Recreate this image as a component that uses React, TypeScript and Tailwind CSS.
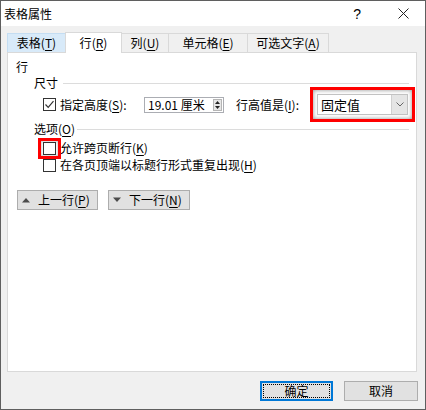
import React from 'react';

const font = { fontFamily: '"Noto Sans CJK SC", "Noto Sans", sans-serif' };

function Mn({ k }: { k: string }) {
  return (
    <span>
      (<span className="underline underline-offset-2">{k}</span>)
    </span>
  );
}

function CheckBox({ checked }: { checked?: boolean }) {
  return (
    <div className="w-[13px] h-[13px] border border-[#333333] bg-white flex items-center justify-center shrink-0">
      {checked && (
        <svg width="11" height="11" viewBox="0 0 11 11">
          <path d="M1.5 5.5 L4.2 8.3 L9.5 2.2" fill="none" stroke="#333333" strokeWidth="1.2" />
        </svg>
      )}
    </div>
  );
}

function Tab({ label, k, w, active, hover }: { label: string; k: string; w: string; active?: boolean; hover?: boolean }) {
  if (active) {
    return (
      <div className={`${w} h-[21px] -mb-px -ml-px relative z-10 bg-white border border-b-0 border-[#d9d9d9] flex items-center justify-center text-[12px] leading-[16px] text-black`}>
        {label}
        <Mn k={k} />
      </div>
    );
  }
  return (
    <div
      className={`${w} h-[19px] -ml-px border border-b-0 flex items-center justify-center text-[12px] leading-[16px] text-black ${
        hover ? 'bg-[#d8eaf9] border-[#c4ddf2]' : 'bg-[#f0f0f0] border-[#d9d9d9]'
      }`}
    >
      {label}
      <Mn k={k} />
    </div>
  );
}

function SmallButton({ label, k, up }: { label: string; k: string; up?: boolean }) {
  return (
    <div className="h-[20px] bg-[#e1e1e1] border border-[#adadad] flex items-center text-[12px] leading-[16px] text-black pl-[4px] pr-[6px] gap-[8px]">
      <svg width="8" height="6" viewBox="0 0 8 6">
        {up ? <path d="M0 5.5 L4 1 L8 5.5 Z" fill="#4b4b4b" /> : <path d="M0 0.5 L4 5 L8 0.5 Z" fill="#4b4b4b" />}
      </svg>
      <span>
        {label}
        <Mn k={k} />
      </span>
    </div>
  );
}

export default function App() {
  return (
    <div className="w-[426px] h-[410px] bg-[#f0f0f0] border border-[#5f5f5f] flex flex-col text-black" style={font}>
      {/* title bar */}
      <div className="h-[25px] bg-white flex items-center pl-[3px] pr-[16px] shrink-0">
        <span className="text-[12px] leading-[16px] flex-1">表格属性</span>
        <span className="text-[14px] leading-[16px] mr-[37px] font-[Liberation_Sans]">?</span>
        <svg width="11" height="11" viewBox="0 0 11 11">
          <path d="M0.5 0.5 L10.5 10.5 M10.5 0.5 L0.5 10.5" stroke="#222" strokeWidth="1" />
        </svg>
      </div>

      {/* tabs */}
      <div className="mt-[6px] ml-[7px] h-[20px] flex items-end shrink-0">
        <Tab label="表格" k="T" w="w-[59px]" hover />
        <Tab label="行" k="R" w="w-[57px]" active />
        <Tab label="列" k="U" w="w-[48px]" />
        <Tab label="单元格" k="E" w="w-[80px]" />
        <Tab label="可选文字" k="A" w="w-[82px]" />
      </div>

      {/* panel */}
      <div className="ml-[6px] w-[410px] h-[320px] bg-white border border-[#d9d9d9] shrink-0 flex flex-col text-[12px] leading-[16px]">
        <div className="mt-[6px] pl-[8px] h-[16px]">行</div>

        <div className="h-[16px] flex items-center pl-[26px] pr-[7px]">
          <span>尺寸</span>
          <div className="flex-1 h-px bg-[#dcdcdc] ml-[5px]" />
        </div>

        <div className="-mt-[4px] h-[35px] flex items-center">
          <div className="ml-[35px]">
            <CheckBox checked />
          </div>
          <div className="ml-[4px] w-[84px]">
            指定高度
            <Mn k="S" />:
          </div>
          <div className="w-[80px] h-[16px] border border-[#abadb3] flex items-center pl-[3px] pr-px">
            <span className="flex-1 leading-[14px]">19.01 厘米</span>
            <div className="w-[9px] h-[12px] bg-[#e6e6e6] border border-[#b5b5b5] flex flex-col items-center justify-center gap-[2px]">
              <svg width="5" height="3" viewBox="0 0 5 3">
                <path d="M0 3 L2.5 0 L5 3 Z" fill="#222" />
              </svg>
              <svg width="5" height="3" viewBox="0 0 5 3">
                <path d="M0 0 L2.5 3 L5 0 Z" fill="#222" />
              </svg>
            </div>
          </div>
          <div className="ml-[12px] w-[74px]">
            行高值是
            <Mn k="I" />:
          </div>
          <div className="w-[105px] h-[35px] border-[3px] border-[#ff0000] p-[4px] shadow-[inset_0_0_4px_rgba(0,0,0,0.45)] flex items-center">
            <div className="w-[91px] h-[21px] bg-white border border-[#c2c2c2] flex items-center">
              <span className="flex-1 pl-[3px] text-[13px]">固定值</span>
              <div className="w-[16px] h-full bg-[#e5e5e5] border-l border-[#d0d0d0] flex items-center justify-center">
                <svg width="8" height="5" viewBox="0 0 8 5">
                  <path d="M0.5 0.5 L4 4 L7.5 0.5" fill="none" stroke="#666" strokeWidth="1" />
                </svg>
              </div>
            </div>
          </div>
        </div>

        <div className="-mt-px h-[16px] flex items-center pl-[26px] pr-[7px]">
          <span>
            选项
            <Mn k="O" />
          </span>
          <div className="flex-1 h-px bg-[#dcdcdc] ml-[2px]" />
        </div>

        <div className="mt-[3px] h-[16px] flex items-center pl-[35px]">
          <div className="relative">
            <CheckBox />
            <div className="absolute -left-[5px] -top-[4px] w-[23px] h-[21px] border-[3px] border-[#ff0000] shadow-[inset_0_0_3px_rgba(0,0,0,0.35)]" />
          </div>
          <span className="ml-[4px]">
            允许跨页断行
            <Mn k="K" />
          </span>
        </div>

        <div className="mt-px h-[16px] flex items-center pl-[35px]">
          <CheckBox />
          <span className="ml-[4px]">
            在各页顶端以标题行形式重复出现
            <Mn k="H" />
          </span>
        </div>

        <div className="mt-[17px] flex pl-[9px] gap-[10px]">
          <div className="w-[81px]">
            <SmallButton label="上一行" k="P" up />
          </div>
          <div className="w-[82px]">
            <SmallButton label="下一行" k="N" />
          </div>
        </div>
      </div>

      {/* footer */}
      <div className="mt-[9px] flex justify-end gap-[11px] pr-[7px] text-[12px] leading-[16px]">
        <div className="w-[73px] h-[20px] border-2 border-[#0078d7] bg-[#e1e1e1] p-px">
          <div className="w-full h-full border border-dotted border-black flex items-center justify-center">确定</div>
        </div>
        <div className="w-[74px] h-[20px] border border-[#adadad] bg-[#e1e1e1] flex items-center justify-center">取消</div>
      </div>
    </div>
  );
}
